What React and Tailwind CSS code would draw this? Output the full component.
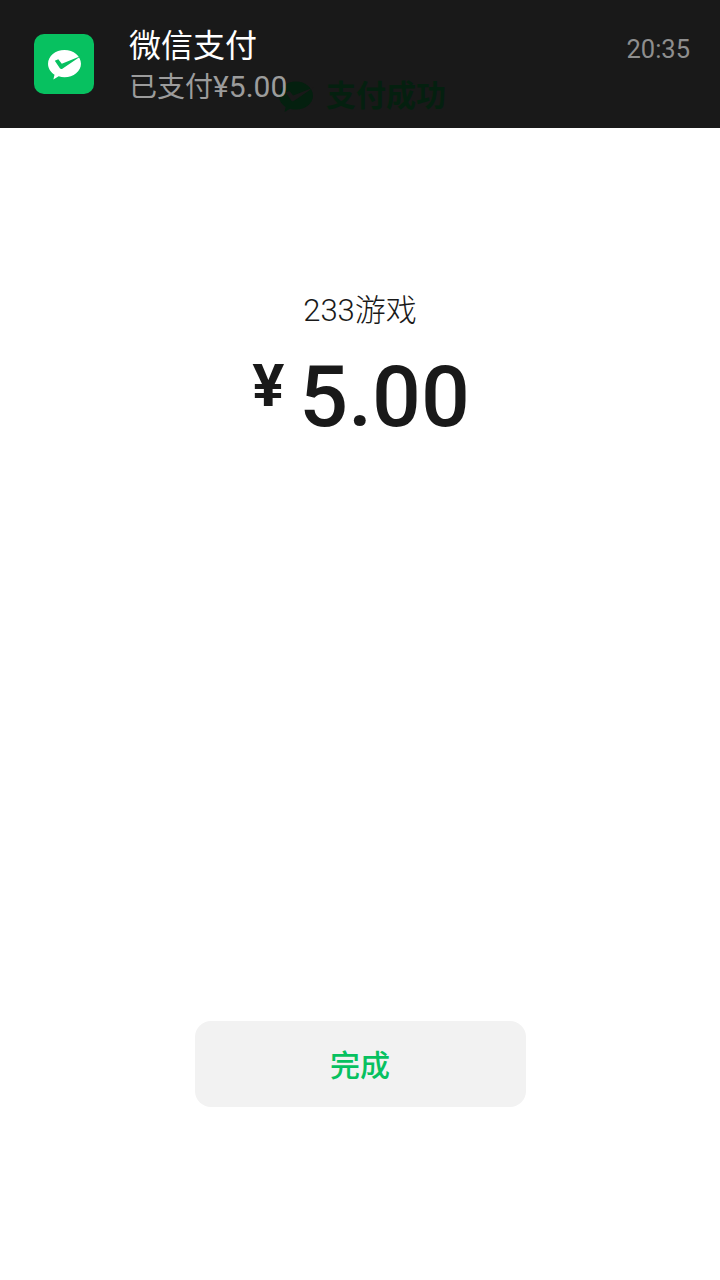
const CJK = { fontFamily: '"Roboto", "Noto Sans CJK SC", sans-serif' };

const PayLogo = ({ className, bubble, check }) => (
  <svg viewBox="0 0 36 32" className={className}>
    <path
      fill={bubble}
      d="M18 1C8.6 1 1 7.4 1 15.2c0 4.6 2.6 8.7 6.7 11.3l-1.2 4.9 5.5-3.2c1.9.6 3.9.9 6 .9 9.4 0 17-6.1 17-13.9C35 7.4 27.4 1 18 1z"
    />
    <path fill={check} d="M8 12l3.6-1.5 3.6 4.6L35.5 7 15.8 20.4c-.9.6-2 .4-2.6-.5L8 12z" />
  </svg>
);

export default function App() {
  return (
    <div className="relative flex min-h-[1280px] w-full flex-col bg-white" style={CJK}>
      <header className="relative flex h-[128px] items-start bg-[#191919] pl-[34px] pr-[30px]">
        {/* the page title showing through the notification */}
        <div className="absolute left-[278px] top-[77px] flex items-center gap-[12px]">
          <PayLogo className="h-[33px] w-[36px]" bubble="#04200f" check="#191919" />
          <span className="text-[30px] font-bold leading-[38px] text-[#04200f]">支付成功</span>
        </div>

        <div className="mt-[34px] flex h-[60px] w-[60px] items-center justify-center rounded-[10px] bg-[#07c160]">
          <PayLogo className="h-[31px] w-[35px]" bubble="#ffffff" check="#07c160" />
        </div>
        <div className="relative ml-[35px] mt-[26px] flex flex-col">
          <span className="text-[32px] font-normal leading-[40px] text-white">微信支付</span>
          <span className="mt-[1px] text-[28px] font-normal leading-[40px] text-[#9c9c9c]">
            已支付<span className="text-[30px]">¥5.00</span>
          </span>
        </div>
        <span className="relative ml-auto mt-[34px] text-[25.5px] font-normal leading-[30px] text-[#8e8e8e]">20:35</span>
      </header>

      <main className="flex flex-1 flex-col items-center">
        <p className="mt-[161px] text-[31px] font-light leading-[44px] text-[#191919]">233游戏</p>
        <div className="mt-[16px] flex items-start text-[#191919]">
          <span className="ml-[2px] mr-[15px] mt-[2px] text-[60px] font-bold leading-[70px]">¥</span>
          <span className="text-[86px] font-medium leading-[96px]">5.00</span>
        </div>

        <button className="mt-[576px] h-[86px] w-[331px] rounded-[16px] bg-[#f2f2f2] pt-[3px] text-[30px] font-medium leading-[40px] text-[#07c160]">
          完成
        </button>
      </main>
    </div>
  );
}
